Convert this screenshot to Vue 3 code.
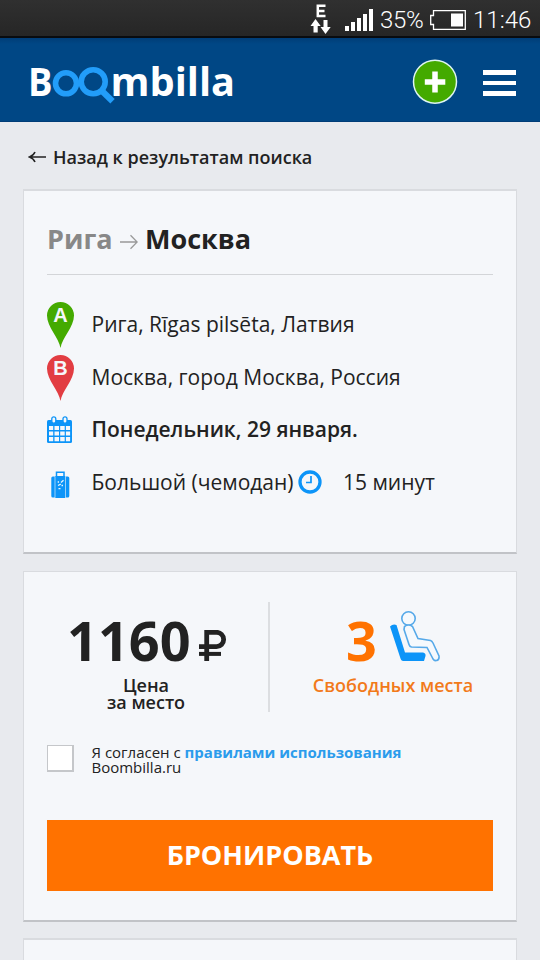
<script setup>
const bars = [5, 9, 13, 17, 22]
</script>

<template>
  <div class="screen">
    <div class="status">
      <svg class="edge" width="22" height="32" viewBox="0 0 22 32">
        <path d="M7 2.700H15.500M7 8H14.500M7 13H15.500M7.800 1.500V14.200" fill="none" stroke="#fff" stroke-width="2.500" />
        <path d="M5.500 16l5.200 7H7.700v6.500H3.500V23H.5zM15.500 31l-5-7h3V17h4v7h3.200z" fill="#fff" />
      </svg>
      <div class="signal"><i v-for="b in bars" :key="b" :style="{ height: b + 'px' }"></i></div>
      <span class="pct">35%</span>
      <svg class="battery" width="36" height="20" viewBox="0 0 36 20">
        <path d="M3.500 .7H35.300V19.300H3.500V14.500H.7V5.500H3.500z" fill="none" stroke="#fff" stroke-width="1.300" />
        <path d="M21 3.500h12v13H21z" fill="#fff" />
      </svg>
      <span class="time">11:46</span>
    </div>

    <header class="header">
      <svg class="logo" width="212" height="46" viewBox="0 0 212 46">
        <text x="2" y="35.500" textLength="24.500" lengthAdjust="spacingAndGlyphs">B</text>
        <text x="84.500" y="35.500" textLength="124.500" lengthAdjust="spacingAndGlyphs">mbilla</text>
        <path d="M76 31l13 13" stroke="#004785" stroke-width="9.500" />
        <g fill="none" stroke="#229df9">
          <circle cx="40" cy="23.300" r="10.500" stroke-width="5.600" />
          <circle cx="67.200" cy="21.700" r="12" stroke-width="5.600" />
          <path d="M75 30l11.500 11.300" stroke-width="6.200" />
        </g>
      </svg>
      <svg class="add" width="46" height="46" viewBox="0 0 46 46">
        <circle cx="23" cy="22.700" r="21.500" fill="#44aa00" stroke="#dff5f2" stroke-width="1.500" />
        <path d="M23 12.500v21M12.800 23h20.500" stroke="#fff" stroke-width="5.500" />
      </svg>
      <div class="burger"><i></i><i></i><i></i></div>
    </header>

    <a class="back">
      <svg width="18" height="14" viewBox="0 0 18 14"><path d="M1.500 7H18M7 2Q5.500 5.500 1.500 7Q5.500 8.500 7 12" fill="none" stroke="#222" stroke-width="1.600" /></svg>
      <span>Назад к результатам поиска</span>
    </a>

    <section class="card trip">
      <h1>
        <span class="from">Рига</span>
        <svg width="18" height="16" viewBox="0 0 18 16"><path d="M0 8H17M10.500 1.300L17.200 8L10.500 14.700" fill="none" stroke="#999" stroke-width="1.300" /></svg>
        <span class="to">Москва</span>
      </h1>
      <div class="row">
        <svg class="icon pinbox" width="28" height="48" viewBox="0 0 28 48">
          <path d="M13.500 47C12 37 0 26 0 14.500a13.500 13.500 0 0 1 27 0C27 26 15 37 13.500 47z" fill="#44aa00" />
          <text class="pin" x="13.500" y="20.500">A</text>
        </svg>
        <span>Рига, Rīgas pilsēta, Латвия</span>
      </div>
      <div class="row">
        <svg class="icon pinbox" width="28" height="48" viewBox="0 0 28 48">
          <path d="M13.500 47C12 37 0 26 0 14.500a13.500 13.500 0 0 1 27 0C27 26 15 37 13.500 47z" fill="#e23d42" />
          <text class="pin" x="13.500" y="21">B</text>
        </svg>
        <span>Москва, город Москва, Россия</span>
      </div>
      <div class="row">
        <svg class="icon calendar" width="28" height="28" viewBox="0 0 28 28">
          <rect x="0" y="4" width="25" height="23" rx="1.500" fill="#0c94f8" />
          <path d="M2 10h4.200v4H2zm5.500 0h4.500v4H7.500zm5.700 0h4.500v4h-4.500zm5.700 0h4.200v4h-4.200zM2 15.500h4.200v4H2zm5.500 0h4.500v4H7.500zm5.700 0h4.500v4h-4.500zm5.700 0h4.200v4h-4.200zM2 21h4.200v4.200H2zm5.500 0h4.500v4.200H7.500zm5.700 0h4.500v4.200h-4.500zm5.700 0h4.200v4.200h-4.200z" fill="#f5f7fa" />
          <rect x="4.800" y=".8" width="4" height="6.400" rx="2" fill="#f5f7fa" stroke="#0c94f8" stroke-width="1.300" />
          <rect x="16" y=".8" width="4" height="6.400" rx="2" fill="#f5f7fa" stroke="#0c94f8" stroke-width="1.300" />
        </svg>
        <span class="date">Понедельник, 29 января.</span>
      </div>
      <div class="row">
        <svg class="icon bag" width="28" height="28" viewBox="0 0 28 28">
          <path d="M9.500 5.500V1.300h7.500v4.200" fill="none" stroke="#0c94f8" stroke-width="1.500" />
          <path d="M8.300 5h9.900v22H8.300zM7.700 5.500V26.500H5.800Q4.300 26.500 4.300 25V7Q4.300 5.500 5.800 5.500zM18.800 5.500h2Q22.300 5.500 22.300 7V25Q22.300 26.500 20.800 26.500h-2z" fill="#0c94f8" />
          <path d="M14 11.500l2.500-2.300M10.700 11h1.300M11 14.500l2.800-1.300M14.500 14.500h1.500M11.500 17.700h2" stroke="#e8f4fc" stroke-width="1.300" />
        </svg>
        <span class="size">Большой (чемодан)</span>
        <svg class="clock" width="24" height="24" viewBox="0 0 24 24">
          <circle cx="12" cy="12" r="10" fill="none" stroke="#0c94f8" stroke-width="3.300" />
          <path d="M13 6v6.500H8" fill="none" stroke="#0c94f8" stroke-width="1.700" />
        </svg>
        <span>15 минут</span>
      </div>
    </section>

    <section class="card book">
      <div class="stats">
        <div class="price">
          <div class="big">
            <span>1160</span>
            <svg width="28" height="32" viewBox="0 0 28 32"><path d="M7.700 31V2.300H17.500a7.150 7.150 0 0 1 0 14.300H0" fill="none" stroke="#222" stroke-width="4.800" /><path d="M0 23.900H22" stroke="#222" stroke-width="4" /></svg>
          </div>
          <div class="label"><div>Цена</div><div>за место</div></div>
        </div>
        <div class="seats">
          <div class="big">
            <span>3</span>
            <svg width="50" height="51" viewBox="0 0 50 51">
              <path d="M0 15.500Q3 12.500 6.500 14L15 41.500H33Q36 42 35.500 45L34 50H13Q11 49.500 10.500 47.500z" fill="#0c94f8" />
              <g fill="#f5f9fd" stroke="#56a9e9" stroke-width="1.600">
                <circle cx="18.500" cy="7.500" r="6.700" />
                <path d="M14.500 15.500Q18.500 12.500 22.500 15.500L28 27.500L40.500 29.500Q42 30 43 32L49 45Q49.500 49 46.500 49.500Q43.500 50 42.500 47L37 36.500L21.500 36Q19.500 35.500 19 33.500L14 18.500z" />
              </g>
            </svg>
          </div>
          <div class="label">Свободных места</div>
        </div>
      </div>
      <div class="agree">
        <i class="box"></i>
        <div class="terms"><div>Я согласен с <b>правилами использования</b></div><div>Boombilla.ru</div></div>
      </div>
      <button class="cta">БРОНИРОВАТЬ</button>
    </section>

    <section class="card next"></section>
  </div>
</template>

<style>
body { background: #e8eaee; overflow: hidden; }
</style>

<style scoped>
* { box-sizing: border-box; }
.screen { width: 540px; height: 960px; overflow: hidden; background: #e8eaee; font-family: "Open Sans", "Noto Sans", sans-serif; color: #222; }
span { white-space: nowrap; }
svg { display: block; flex: none; }
.status { height: 38px; background: linear-gradient(#303030, #262626); border-bottom: 2px solid #090c10; display: flex; align-items: flex-start; padding-left: 310px; color: #fff; font-family: Roboto, sans-serif; font-size: 24px; font-weight: 350; line-height: 40px; }
.edge { margin-top: 3px; }
.signal { display: flex; align-items: flex-end; gap: 2px; height: 22px; margin: 9px 0 0 13px; }
.signal i { width: 4px; background: #fff; }
.pct { width: 43px; margin-left: 7px; letter-spacing: -.3px; }
.battery { margin: 10px 0 0 7px; }
.time { margin-left: 7px; }
.header { height: 84px; background: linear-gradient(#003d77, #004785 6px, #004785); border-bottom: 1px solid #003d77; display: flex; align-items: flex-start; padding: 20px 24px 0 26px; }
.logo { overflow: visible; margin-top: 2px; font-weight: 700; font-size: 39.500px; fill: #fff; }
.add { margin: 1px 0 0 174px; }
.burger { margin: 12px 0 0 25px; display: flex; flex-direction: column; gap: 6px; }
.burger i { width: 33px; height: 4.500px; background: #fff; }
.back { display: flex; align-items: center; height: 67px; padding: 3px 0 0 28px; gap: 7px; font-size: 18px; font-weight: 600; }
.card { width: 494px; margin-left: 23px; background: #f5f7fa; border: 1px solid #d9dbdf; border-top-width: 2px; border-bottom: 2px solid #c1c3c7; padding: 0 23px; }
.trip { height: 365px; }
h1 { margin: 0 0 23px; height: 84px; padding-top: 12px; border-bottom: 1px solid #d3d5d8; display: flex; align-items: center; font-size: 27px; line-height: 38px; }
.from { color: #888; width: 73px; }
h1 svg { margin-top: 7px; margin-right: 7px; }
.row { display: flex; align-items: center; height: 52.600px; font-size: 21px; line-height: 30px; }
.icon { margin-right: 16.500px; }
.pinbox { margin-top: 2px; }
.pin { fill: #f5f7fa; font: 700 20px "Liberation Sans", sans-serif; text-anchor: middle; }
.calendar { margin-top: 1px; }
.date { font-weight: 600; margin-top: -.5px; }
.size { width: 202px; }
.bag { margin-top: 6px; }
.clock { margin: 0 21px 0 4.500px; }
.book { margin-top: 17px; height: 351px; border-top-width: 1px; }
.stats { display: grid; grid-template-columns: 223px 223px; height: 110px; margin-top: 30px; }
.price { border-right: 2px solid #dcdee1; }
.big { display: flex; height: 78px; font-weight: 700; font-size: 54px; line-height: 76px; }
.price .big { padding-left: 20px; }
.price svg { margin: 28px 0 0 8px; }
.label { text-align: center; font-size: 18px; font-weight: 600; line-height: 17px; margin-top: -3px; }
.price .label { padding-right: 23px; }
.seats .big { color: #ff7200; padding-left: 76px; }
.seats svg { margin: 9px 0 0 13px; }
.seats .label { color: #f27a1a; padding-left: 23px; }
.agree { display: flex; margin-top: 32px; height: 76px; padding-top: 1px; }
.box { width: 27px; height: 27px; background: #fff; border: 1px solid #c5c7ca; border-right-width: 2px; border-bottom-width: 2px; }
.terms { margin-left: 17.500px; font-size: 15px; line-height: 15px; }
b { color: #2b9cec; font-weight: 700; }
.cta { display: block; width: 446px; height: 71px; border: 0; padding: 0 0 1px; background: #ff7200; color: #fff; font: 700 27px/68px "Open Sans", sans-serif; }
.next { margin-top: 16px; height: 40px; }
</style>
